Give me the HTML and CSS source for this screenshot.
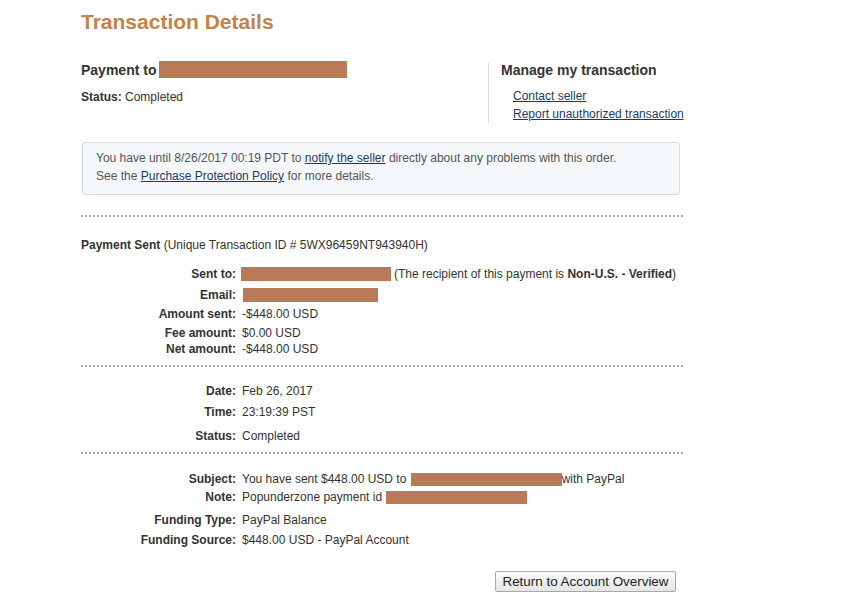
FILE: index.html
```html
<!DOCTYPE html>
<html>
<head>
<meta charset="utf-8">
<link rel="stylesheet" href="styles.css">
</head>
<body>
<div class="page">
  <h1 class="title">Transaction Details</h1>

  <div class="header">
    <div class="header-main">
      <div class="payto"><span>Payment to</span><span class="redact redact-payto"></span></div>
      <div class="status"><b>Status:</b> Completed</div>
    </div>
    <div class="manage">
      <div class="manage-title">Manage my transaction</div>
      <ul class="manage-links">
        <li><a href="#">Contact seller</a></li>
        <li><a href="#">Report unauthorized transaction</a></li>
      </ul>
    </div>
  </div>

  <div class="notice">
    <p>You have until 8/26/2017 00:19 PDT to <a href="#">notify the seller</a> directly about any problems with this order.</p>
    <p>See the <a href="#">Purchase Protection Policy</a> for more details.</p>
  </div>

  <div class="dots dots-1"></div>

  <div class="sent-head"><b>Payment Sent</b> (Unique Transaction ID # 5WX96459NT943940H)</div>

  <div class="details details-1">
    <div class="row"><span class="label">Sent to:</span><span class="value"><span class="redact redact-sent"></span><span class="after-bar">(The recipient of this payment is <b>Non-U.S. - Verified</b>)</span></span></div>
    <div class="row gap-5"><span class="label">Email:</span><span class="value"><span class="redact redact-email"></span></span></div>
    <div class="row gap-3"><span class="label">Amount sent:</span><span class="value">-$448.00 USD</span></div>
    <div class="row gap-3"><span class="label">Fee amount:</span><span class="value">$0.00 USD</span></div>
    <div class="row"><span class="label">Net amount:</span><span class="value">-$448.00 USD</span></div>
  </div>

  <div class="dots dots-2"></div>

  <div class="details details-2">
    <div class="row"><span class="label">Date:</span><span class="value">Feb 26, 2017</span></div>
    <div class="row gap-5"><span class="label">Time:</span><span class="value">23:19:39 PST</span></div>
    <div class="row gap-8"><span class="label">Status:</span><span class="value">Completed</span></div>
  </div>

  <div class="dots dots-3"></div>

  <div class="details details-3">
    <div class="row"><span class="label">Subject:</span><span class="value">You have sent $448.00 USD to&nbsp;<span class="redact redact-subject"></span>with PayPal</span></div>
    <div class="row gap-2"><span class="label">Note:</span><span class="value">Popunderzone payment id&nbsp;<span class="redact redact-note"></span></span></div>
    <div class="row gap-7"><span class="label">Funding Type:</span><span class="value">PayPal Balance</span></div>
    <div class="row gap-4"><span class="label">Funding Source:</span><span class="value">$448.00 USD - PayPal Account</span></div>
  </div>

  <div class="actions">
    <button class="btn" type="button">Return to Account Overview</button>
  </div>
</div>
</body>
</html>
```

FILE: styles.css
```css
html, body {
  margin: 0;
  padding: 0;
  background: #ffffff;
}

body {
  font-family: "Liberation Sans", Arial, sans-serif;
  font-size: 12px;
  line-height: 16px;
  color: #333333;
}

.page {
  width: 602px;
  padding-left: 81px;
  padding-top: 10px;
}

.title {
  margin: 0;
  font-size: 21px;
  line-height: 24px;
  font-weight: bold;
  color: #c4824a;
}

.redact {
  display: inline-block;
  background: #b97a57;
}

/* header */
.header {
  display: flex;
  margin-top: 28px;
}

.header-main {
  width: 407px;
  flex: none;
}

.payto {
  display: flex;
  align-items: center;
  gap: 3px;
  font-size: 14px;
  font-weight: bold;
  height: 17px;
  margin-top: -1px;
}

.redact-payto {
  width: 188px;
  height: 17px;
}

.status {
  margin-top: 11px;
}

.manage {
  flex: none;
  white-space: nowrap;
  border-left: 1px solid #dddddd;
  padding-left: 12px;
  height: 61px;
}

.manage-title {
  font-size: 14px;
  font-weight: bold;
  line-height: 16px;
}

.manage-links {
  list-style: none;
  margin: 9px 0 0 12px;
  padding: 0;
  line-height: 18px;
}

a {
  color: #1b3a6b;
  text-decoration: underline;
}

/* notice */
.notice {
  margin: 19px 3px 0 1px;
  background: #f5f8fb;
  border: 1px solid #d5dee6;
  border-radius: 3px;
  padding: 6px 13px 9px 13px;
  color: #555555;
  line-height: 18px;
}

.notice p {
  margin: 0;
}

/* dotted separators */
.dots {
  height: 2px;
  background-image: linear-gradient(to right, #aaaaaa 50%, transparent 50%);
  background-size: 4px 2px;
  background-repeat: repeat-x;
}

.dots-1 { margin-top: 20px; }
.dots-2 { margin-top: 8px; }
.dots-3 { margin-top: 8px; }

.sent-head {
  margin-top: 20px;
}

/* detail rows */
.details-1 { margin-top: 13px; }
.details-2 { margin-top: 16px; }
.details-3 { margin-top: 17px; }

.row {
  display: flex;
  align-items: center;
  min-height: 16px;
}

.label {
  width: 155px;
  flex: none;
  text-align: right;
  font-weight: bold;
  margin-right: 6px;
}

.value {
  display: flex;
  align-items: center;
  white-space: nowrap;
}

.gap-2 { margin-top: 2px; }
.gap-3 { margin-top: 3px; }
.gap-4 { margin-top: 4px; }
.gap-5 { margin-top: 5px; }
.gap-7 { margin-top: 7px; }
.gap-8 { margin-top: 8px; }

.redact-sent {
  width: 150px;
  height: 14px;
  margin-left: -1px;
}

.after-bar {
  margin-left: 3px;
}

.redact-email {
  width: 135px;
  height: 14px;
  margin-left: 1px;
}

.redact-subject {
  width: 151px;
  height: 13px;
  margin-left: 1px;
}

.redact-note {
  width: 141px;
  height: 13px;
  margin-left: 1px;
}

/* actions */
.actions {
  display: flex;
  justify-content: flex-end;
  margin-top: 23px;
  padding-right: 7px;
}

.btn {
  font-family: "Liberation Sans", Arial, sans-serif;
  font-size: 13.4px;
  line-height: 15px;
  color: #222222;
  width: 181px;
  height: 21px;
  padding: 0;
  border: 1px solid #a8a8a8;
  border-radius: 2px;
  background: linear-gradient(#fbfbfb, #e6e6e6);
}
```
